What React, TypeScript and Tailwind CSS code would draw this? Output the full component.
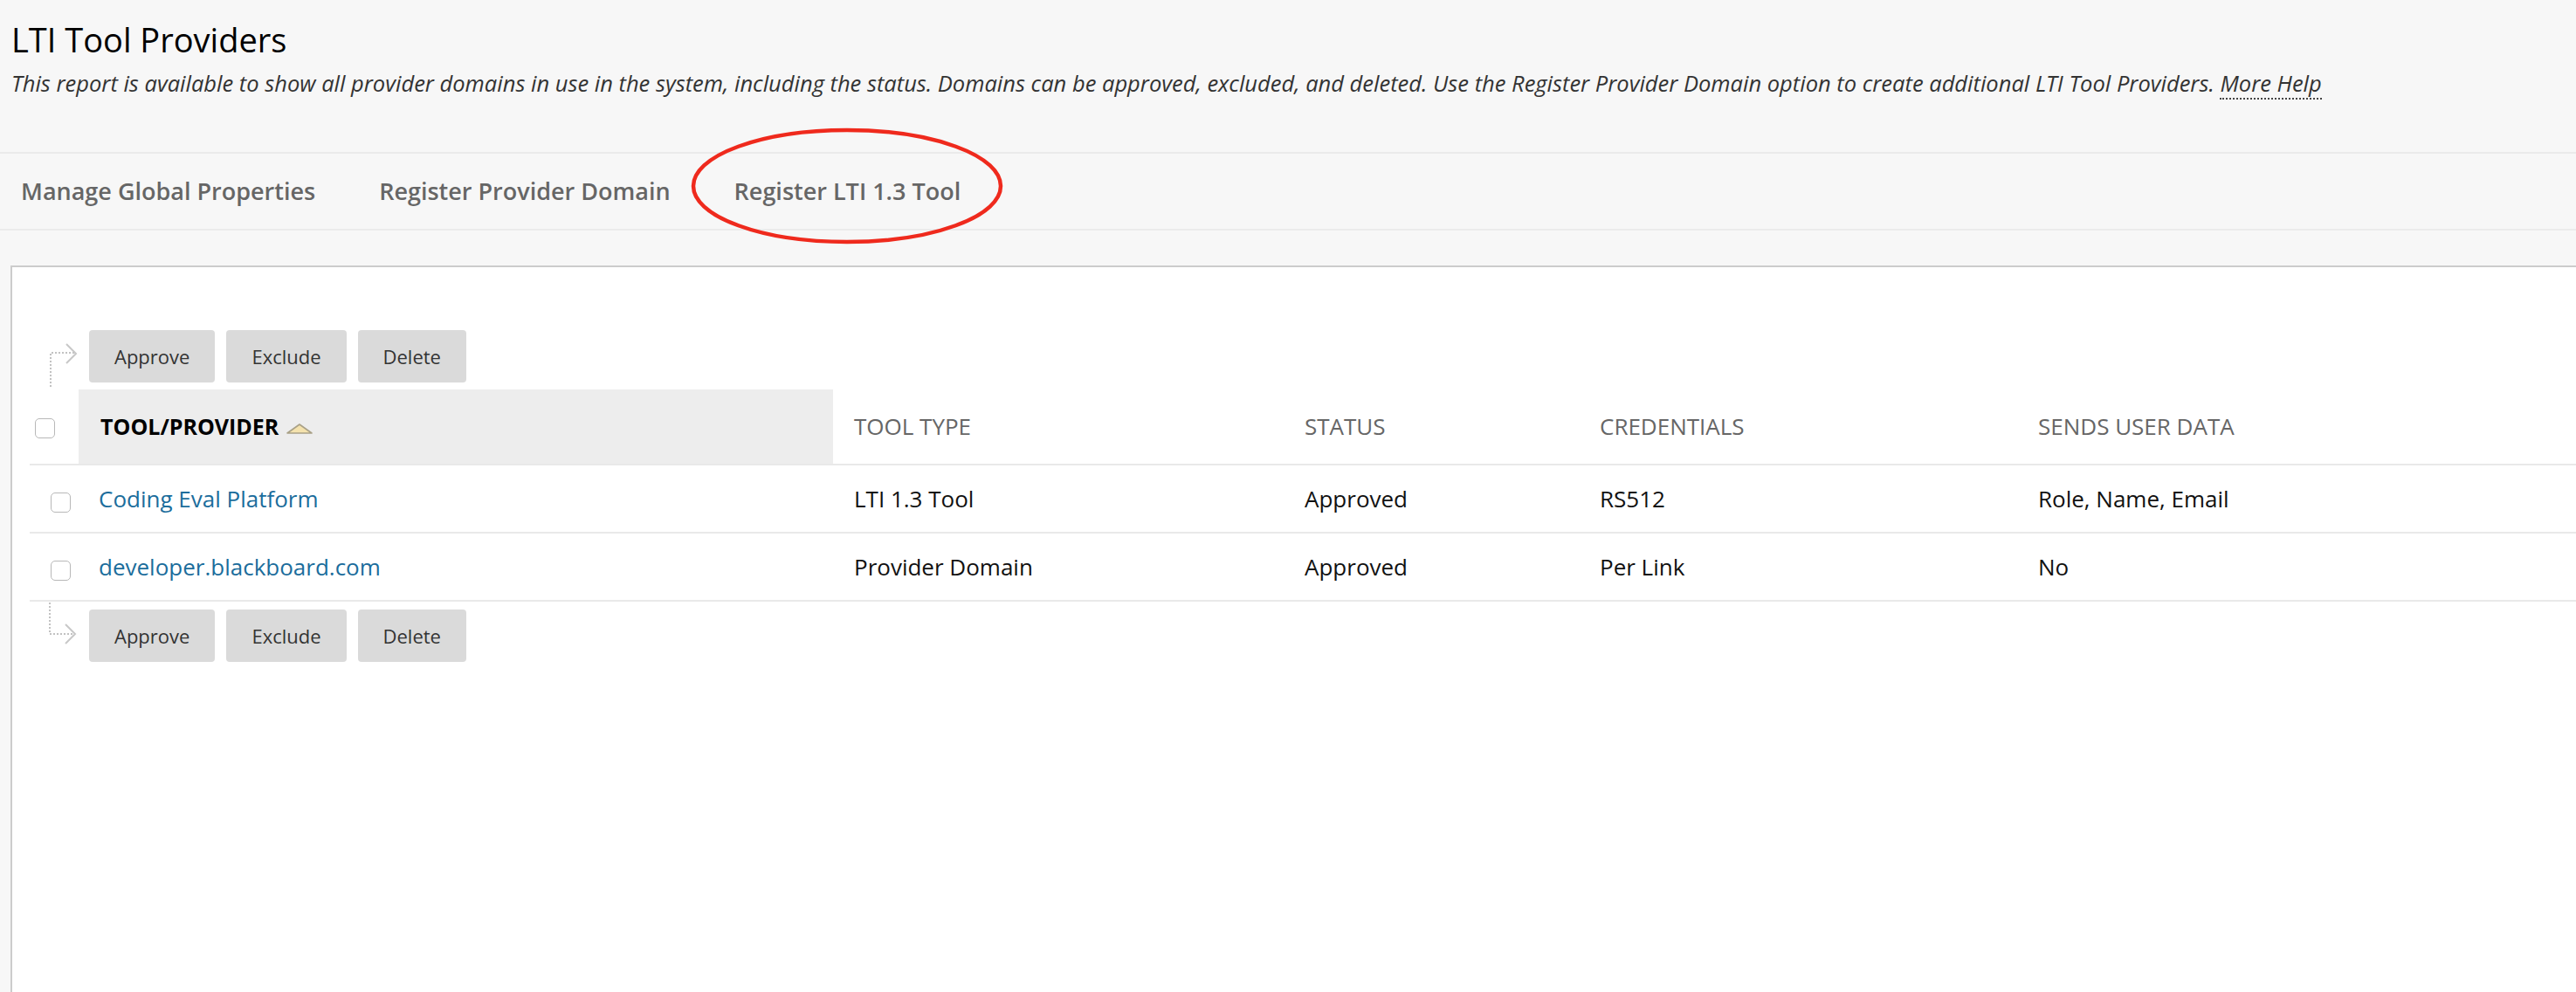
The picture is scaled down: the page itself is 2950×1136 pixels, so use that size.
import React from "react";

function Checkbox() {
  return (
    <div className="w-[23px] h-[23px] rounded-[5px] border-[1.5px] border-[#b8b8b8] bg-white" />
  );
}

function Btn({ children }: { children: React.ReactNode }) {
  return (
    <button className="h-[60px] px-[29px] rounded-[4px] bg-[#dadada] text-[22px] leading-[30px] text-[#333]">
      {children}
    </button>
  );
}

function ActionBar({ bottom }: { bottom?: boolean }) {
  return (
    <div className="flex items-center h-[60px]">
      <svg width="56" height="60" viewBox="0 0 56 60" className="overflow-visible shrink-0">
        {bottom ? (
          <>
            <path d="M23 -8 L23 28 L50 28" fill="none" stroke="#c2c2c2" strokeWidth="2" strokeDasharray="2 2" />
            <path d="M41 17 L52 28 L41 39" fill="none" stroke="#c8c8c8" strokeWidth="2" />
          </>
        ) : (
          <>
            <path d="M24 65 L24 26 L51 26" fill="none" stroke="#c2c2c2" strokeWidth="2" strokeDasharray="2 2" />
            <path d="M42 16 L53 27 L42 38" fill="none" stroke="#c8c8c8" strokeWidth="2" />
          </>
        )}
      </svg>
      <div className="ml-[12px] flex gap-[13px]">
        <Btn>Approve</Btn>
        <Btn>Exclude</Btn>
        <Btn>Delete</Btn>
      </div>
    </div>
  );
}

const cols = "grid grid-cols-[56px_864px_516px_338px_502px_1fr]";

const rows = [
  { name: "Coding Eval Platform", type: "LTI 1.3 Tool", status: "Approved", cred: "RS512", sends: "Role, Name, Email" },
  { name: "developer.blackboard.com", type: "Provider Domain", status: "Approved", cred: "Per Link", sends: "No" },
];

export default function App() {
  return (
    <div className="relative w-[2950px] h-[1136px] bg-[#f7f7f7] font-['Open_Sans',sans-serif] flex flex-col overflow-hidden">
      <div className="pl-[13px] pt-[19px]">
        <h1 className="text-[38px] leading-[52px] text-black font-normal">LTI Tool Providers</h1>
        <p className="mt-[6px] text-[25.5px] leading-[36px] italic text-[#333] whitespace-nowrap">
          This report is available to show all provider domains in use in the system, including the status. Domains can be approved, excluded, and deleted. Use the Register Provider Domain option to create additional LTI Tool Providers.{" "}
          <span className="border-b-2 border-dotted border-[#444]">More Help</span>
        </p>
      </div>

      <nav className="mt-[61px] h-[90px] shrink-0 border-y-2 border-[#ebebeb] flex items-center pl-[24px] gap-[73px] text-[27px] font-semibold text-[#666]">
        <span>Manage Global Properties</span>
        <span>Register Provider Domain</span>
        <span>Register LTI 1.3 Tool</span>
      </nav>

      <div className="mt-[40px] ml-[12px] flex-1 bg-white border-l-2 border-t-2 border-[#cccccc] pt-[72px] pl-[20px]">
        <ActionBar />
        <div className="mt-[8px]">
          <div className={`${cols} h-[87px] border-b-2 border-[#e9e9e9] text-[26px] text-[#666]`}>
            <div className="flex items-center pl-[6px] pt-[4px]">
              <Checkbox />
            </div>
            <div className="flex items-center pl-[25px] bg-[#ededed] text-[25px] font-bold text-black">
              <span>TOOL/PROVIDER</span>
              <svg width="32" height="14" viewBox="0 0 32 14" className="ml-[8px] mt-[4px]">
                <path d="M2 12 L16 2 L30 12 Z" fill="#f4e2ad" stroke="#a9a187" strokeWidth="1.6" strokeLinejoin="round" />
              </svg>
            </div>
            <div className="flex items-center pl-[24px]">TOOL TYPE</div>
            <div className="flex items-center pl-[24px]">STATUS</div>
            <div className="flex items-center pl-[24px]">CREDENTIALS</div>
            <div className="flex items-center pl-[24px]">SENDS USER DATA</div>
          </div>
          {rows.map((r) => (
            <div key={r.name} className={`${cols} h-[78px] border-b-2 border-[#e9e9e9] text-[26px] text-[#111]`}>
              <div className="flex items-center pl-[24px] pt-[9px]">
                <Checkbox />
              </div>
              <div className="flex items-center pl-[23px] text-[#1b6d9c]">{r.name}</div>
              <div className="flex items-center pl-[24px]">{r.type}</div>
              <div className="flex items-center pl-[24px]">{r.status}</div>
              <div className="flex items-center pl-[24px]">{r.cred}</div>
              <div className="flex items-center pl-[24px]">{r.sends}</div>
            </div>
          ))}
        </div>
        <div className="mt-[9px]">
          <ActionBar bottom />
        </div>
      </div>

      <svg className="absolute left-0 top-0 pointer-events-none" width="2950" height="1136">
        <ellipse cx="970" cy="213" rx="176" ry="64" fill="none" stroke="#ef2a1d" strokeWidth="4.5" />
      </svg>
    </div>
  );
}
